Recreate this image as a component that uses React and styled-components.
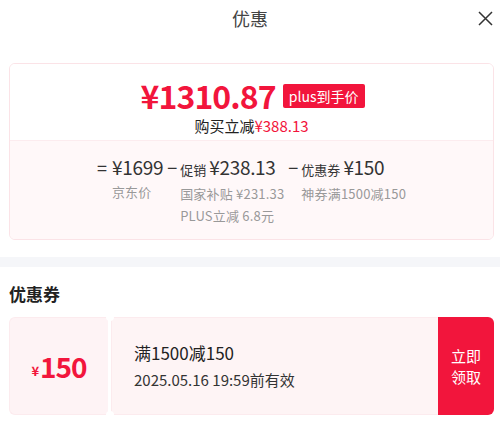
import React from 'react';
import styled, { createGlobalStyle } from 'styled-components';

const RED = '#f2153c';

const GlobalStyle = createGlobalStyle`
  html, body {
    margin: 0;
    padding: 0;
    background: #fff;
  }
  body {
    font-family: "Noto Sans CJK SC", "Noto Sans", sans-serif;
    color: #222;
  }
`;

const Page = styled.div`
  width: 500px;
  height: 421px;
  overflow: hidden;
  background: #fff;
`;

const Header = styled.header`
  height: 36px;
  display: grid;
  grid-template-columns: 1fr auto 1fr;
  align-items: center;
`;

const Title = styled.h1`
  grid-column: 2;
  margin: 0;
  font-size: 18px;
  font-weight: 400;
  color: #444;
  line-height: 36px;
`;

const CloseButton = styled.button`
  justify-self: end;
  margin-right: 6px;
  width: 17px;
  height: 17px;
  padding: 0;
  border: none;
  background: none;
  display: flex;
  align-items: center;
  justify-content: center;
`;

const Section = styled.section`
  padding: ${p => p.$top || 0}px 6px 0 9px;
`;

const PriceCard = styled.div`
  border: 1px solid #fbe3e7;
  border-radius: 6px;
  overflow: hidden;
`;

const CardTop = styled.div`
  display: flex;
  flex-direction: column;
  align-items: center;
  padding: 11px 0 3px;
  background: #fff;
`;

const PriceLine = styled.div`
  height: 40px;
  display: flex;
  align-items: center;
  gap: 7px;
  margin-left: 2px;
`;

const BigPrice = styled.span`
  color: ${RED};
  font-size: 32px;
  font-weight: 700;
  letter-spacing: -0.9px;
  line-height: 40px;
`;

const Badge = styled.span`
  background: ${RED};
  color: #fff;
  font-size: 14px;
  line-height: 24px;
  padding: 0 6px;
  border-radius: 2px;
  margin-top: 1px;
`;

const SaveLine = styled.div`
  font-size: 15px;
  line-height: 22px;
  color: #222;
`;

const Red = styled.span`
  color: ${RED};
`;

const CardBottom = styled.div`
  background: #fff8f9;
  border-top: 1px solid #fcecef;
  padding: 13px 0 12px;
  display: flex;
  justify-content: center;
  gap: 4px;
`;

const Term = styled.div`
  display: grid;
  grid-template-columns: ${p => p.$op}px auto;
  align-content: start;
`;

const Operator = styled.span`
  font-size: 18px;
  line-height: 26px;
  color: #333;
`;

const TermMain = styled.div`
  display: flex;
  flex-direction: column;
`;

const TermValue = styled.div`
  line-height: 26px;
  color: #333;
  white-space: nowrap;
`;

const TermLabel = styled.span`
  font-size: 13px;
  margin-right: 3px;
`;

const TermAmount = styled.span`
  font-size: 19px;
  letter-spacing: -0.3px;
`;

const SubLabel = styled.div`
  font-size: 13px;
  line-height: 22px;
  color: #999;
  white-space: nowrap;
  letter-spacing: 0.2px;
`;

const Divider = styled.div`
  height: 10px;
  background: #f5f6f9;
  margin-top: 17px;
`;

const Heading = styled.h2`
  margin: 0 0 11px;
  font-size: 17px;
  font-weight: 700;
  line-height: 24px;
  color: #222;
`;

const Coupon = styled.div`
  display: flex;
  height: 98px;
`;

const Stub = styled.div`
  position: relative;
  width: 98px;
  background: #fef3f5;
  border: 1px solid #fcebee;
  border-right: none;
  border-radius: 6px 2px 2px 6px;
  margin-right: 3px;
  display: flex;
  align-items: center;
  justify-content: center;
  color: ${RED};

  &::before,
  &::after {
    content: '';
    position: absolute;
    right: -6px;
    width: 8px;
    height: 8px;
    border-radius: 50%;
    background: #fff;
  }
  &::before { top: -5px; }
  &::after { bottom: -5px; }
`;

const Yen = styled.span`
  font-size: 13px;
  font-weight: 700;
  margin-top: 8px;
  margin-right: 1px;
`;

const StubAmount = styled.span`
  font-size: 28px;
  font-weight: 700;
  letter-spacing: -1px;
`;

const CouponBody = styled.div`
  flex: 1;
  background: #fef4f5;
  border: 1px solid #fcebee;
  border-right: none;
  border-radius: 2px 0 0 2px;
  display: flex;
  flex-direction: column;
  justify-content: center;
  padding-left: 22px;
`;

const CouponTitle = styled.div`
  font-size: 17px;
  line-height: 27px;
  color: #222;
`;

const CouponDate = styled.div`
  font-size: 15px;
  line-height: 27px;
  color: #333;
`;

const TakeButton = styled.button`
  width: 56px;
  border: none;
  background: ${RED};
  color: #fff;
  border-radius: 0 6px 6px 0;
  font-family: inherit;
  font-size: 15px;
  line-height: 21px;
  padding: 0;
`;

const CloseIcon = () => (
  <svg width="15" height="15" viewBox="0 0 15 15">
    <path d="M1 1 L14 14 M14 1 L1 14" stroke="#333" strokeWidth="1.5" fill="none" />
  </svg>
);

const terms = [
  { op: '=', amount: '¥1699', subs: ['京东价'] },
  { op: '−', label: '促销', amount: '¥238.13', subs: ['国家补贴 ¥231.33', 'PLUS立减 6.8元'] },
  { op: '−', label: '优惠券', amount: '¥150', subs: ['神券满1500减150'] },
];

export default function App() {
  return (
    <Page>
      <GlobalStyle />
      <Header>
        <Title>优惠</Title>
        <CloseButton aria-label="关闭"><CloseIcon /></CloseButton>
      </Header>

      <Section $top={27}>
        <PriceCard>
          <CardTop>
            <PriceLine>
              <BigPrice>¥1310.87</BigPrice>
              <Badge>plus到手价</Badge>
            </PriceLine>
            <SaveLine>购买立减<Red>¥388.13</Red></SaveLine>
          </CardTop>
          <CardBottom>
            {terms.map((t, i) => (
              <Term key={i} $op={i === 0 ? 15 : 13}>
                <Operator>{t.op}</Operator>
                <TermMain>
                  <TermValue>
                    {t.label && <TermLabel>{t.label}</TermLabel>}
                    <TermAmount>{t.amount}</TermAmount>
                  </TermValue>
                  {t.subs.map(s => <SubLabel key={s}>{s}</SubLabel>)}
                </TermMain>
              </Term>
            ))}
          </CardBottom>
        </PriceCard>
      </Section>

      <Divider />

      <Section $top={15}>
        <Heading>优惠券</Heading>
        <Coupon>
          <Stub>
            <Yen>¥</Yen>
            <StubAmount>150</StubAmount>
          </Stub>
          <CouponBody>
            <CouponTitle>满1500减150</CouponTitle>
            <CouponDate>2025.05.16 19:59前有效</CouponDate>
          </CouponBody>
          <TakeButton>立即<br />领取</TakeButton>
        </Coupon>
      </Section>
    </Page>
  );
}
